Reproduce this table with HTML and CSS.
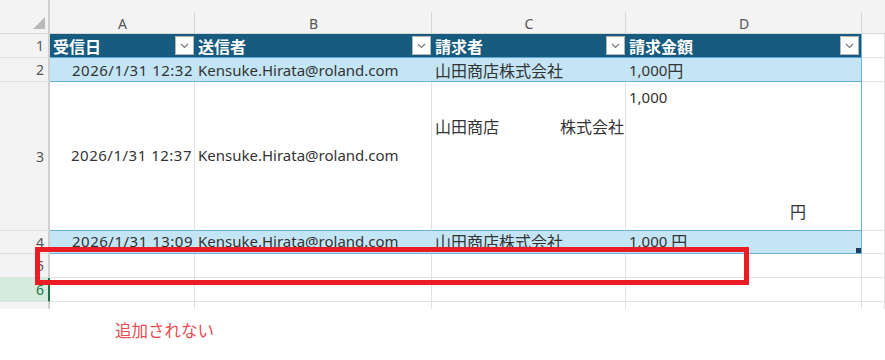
FILE: index.html
```html
<!DOCTYPE html>
<html lang="ja">
<head>
<meta charset="utf-8">
<title>sheet</title>
<link rel="stylesheet" href="styles.css">
</head>
<body>
<div class="wrap">
  <div class="sheet">
    <div class="corner"><span class="tri"></span></div>
    <div class="ch">A</div>
    <div class="ch">B</div>
    <div class="ch">C</div>
    <div class="ch">D</div>
    <div class="ch ch-e"></div>

    <div class="rh">1</div>
    <div class="th">受信日<span class="fb"><svg width="9" height="6" viewBox="0 0 9 6"><path d="M1 1l3.5 3.5L8 1" fill="none" stroke="#777" stroke-width="1.1"/></svg></span></div>
    <div class="th">送信者<span class="fb"><svg width="9" height="6" viewBox="0 0 9 6"><path d="M1 1l3.5 3.5L8 1" fill="none" stroke="#777" stroke-width="1.1"/></svg></span></div>
    <div class="th">請求者<span class="fb"><svg width="9" height="6" viewBox="0 0 9 6"><path d="M1 1l3.5 3.5L8 1" fill="none" stroke="#777" stroke-width="1.1"/></svg></span></div>
    <div class="th th-last">請求金額<span class="fb"><svg width="9" height="6" viewBox="0 0 9 6"><path d="M1 1l3.5 3.5L8 1" fill="none" stroke="#777" stroke-width="1.1"/></svg></span></div>
    <div class="c"></div>

    <div class="rh">2</div>
    <div class="td band num">2026/1/31 12:32</div>
    <div class="td band">Kensuke.Hirata@roland.com</div>
    <div class="td band jp">山田商店株式会社</div>
    <div class="td band last">1,000<span class="jp">円</span></div>
    <div class="c"></div>

    <div class="rh">3</div>
    <div class="td plain num mid">2026/1/31 12:37</div>
    <div class="td plain mid">Kensuke.Hirata@roland.com</div>
    <div class="td plain split jp"><span>山田商店</span><span>株式会社</span></div>
    <div class="td plain last amount"><span>1,000</span><span class="yen jp">円</span></div>
    <div class="c"></div>

    <div class="rh">4</div>
    <div class="td band num r4">2026/1/31 13:09</div>
    <div class="td band r4">Kensuke.Hirata@roland.com</div>
    <div class="td band r4 jp">山田商店株式会社</div>
    <div class="td band last handle r4">1,000&nbsp;<span class="jp">円</span></div>
    <div class="c"></div>

    <div class="rh">5</div>
    <div class="c"></div><div class="c"></div><div class="c"></div><div class="c"></div><div class="c"></div>

    <div class="rh rh-sel">6</div>
    <div class="c"></div><div class="c"></div><div class="c"></div><div class="c"></div><div class="c"></div>

    <div class="rh rh-cut"></div>
    <div class="c cut"></div><div class="c cut"></div><div class="c cut"></div><div class="c cut"></div><div class="c cut"></div>
  </div>
  <div class="redbox"></div>
  <p class="note">追加されない</p>
</div>
</body>
</html>
```

FILE: styles.css
```css
html, body {
  margin: 0;
  padding: 0;
  background: #ffffff;
}

.wrap {
  position: relative;
  width: 885px;
  height: 360px;
  overflow: hidden;
  font-family: "Noto Sans", "Noto Sans CJK JP", sans-serif;
}

.sheet {
  display: grid;
  grid-template-columns: 50px 145px 237px 194px 236px 23px;
  grid-template-rows: 34px 24px 24px 149px 23px 24px 24px 7px;
  font-size: 15px;
  color: #333;
}

.sheet > div {
  box-sizing: border-box;
  white-space: nowrap;
  overflow: hidden;
}

.jp {
  font-size: 16px;
}

.corner {
  background: #f3f3f3;
  border-right: 2px solid #cfcfcf;
  border-bottom: 1px solid #d6d6d6;
  position: relative;
}

.tri {
  position: absolute;
  right: 3px;
  bottom: 4px;
  width: 0;
  height: 0;
  border-left: 12px solid transparent;
  border-bottom: 12px solid #b9b9b9;
}

.ch {
  background: #f3f3f3 linear-gradient(#d6d6d6, #d6d6d6) right 12px / 1px 100% no-repeat;
  border-bottom: 1px solid #d6d6d6;
  color: #555;
  font-size: 14px;
  display: flex;
  align-items: center;
  justify-content: center;
  padding-top: 13px;
}

.ch-e {
  background: #f3f3f3;
}

.rh {
  background: #f3f3f3;
  border-right: 2px solid #cfcfcf;
  border-bottom: 1px solid #dedede;
  color: #555;
  font-size: 14px;
  display: flex;
  align-items: center;
  justify-content: flex-end;
  padding-right: 4px;
}

.rh-sel {
  background: #d3ecdd;
  color: #1e7145;
  border-right: 2px solid #1e7145;
}

.rh-cut {
  border-bottom: none;
}

.c {
  border-right: 1px solid #e1e1e1;
  border-bottom: 1px solid #e1e1e1;
}

.c.cut {
  border-bottom: none;
}

.th {
  background: #175b7e;
  color: #ffffff;
  font-weight: bold;
  font-size: 16px;
  display: flex;
  align-items: center;
  justify-content: space-between;
  padding: 0 1px 0 3px;
  border-bottom: 1px solid #5aa4d4;
}

.th-last {
  border-right: 1px solid #6cb2df;
  padding-right: 2px;
}

.fb {
  width: 19px;
  height: 19px;
  box-sizing: border-box;
  background: #fff;
  border: 1px solid #b5b5b5;
  display: flex;
  align-items: center;
  justify-content: center;
}

.td {
  display: flex;
  align-items: center;
  padding: 0 3px;
  border-bottom: 1px solid #6cb2df;
}

.band {
  background: #c4e5f6;
}

.plain {
  background: #ffffff;
  border-right: 1px solid #e1e1e1;
}

.last {
  border-right: 1px solid #6cb2df;
}

.num {
  justify-content: flex-end;
  letter-spacing: 0.5px;
  padding-right: 2px;
}

.mid {
  padding-bottom: 2px;
}

.r4 {
  padding-bottom: 3px;
}

.split {
  justify-content: space-between;
  align-items: flex-start;
  padding-top: 32px;
  padding-right: 1px;
}

.amount {
  flex-direction: column;
  align-items: flex-start;
  justify-content: space-between;
  padding-top: 5px;
  padding-bottom: 7px;
}

.yen {
  margin-left: 161px;
}

.handle {
  position: relative;
}

.handle::after {
  content: "";
  position: absolute;
  right: 0;
  bottom: 0;
  width: 5px;
  height: 5px;
  background: #1b3b5c;
}

.redbox {
  position: absolute;
  left: 35px;
  top: 247px;
  width: 714px;
  height: 38px;
  box-sizing: border-box;
  border: 5px solid #ec1c24;
}

.note {
  margin: 9px 0 0 115px;
  font-size: 16.5px;
  color: #ec4b4f;
}
```
